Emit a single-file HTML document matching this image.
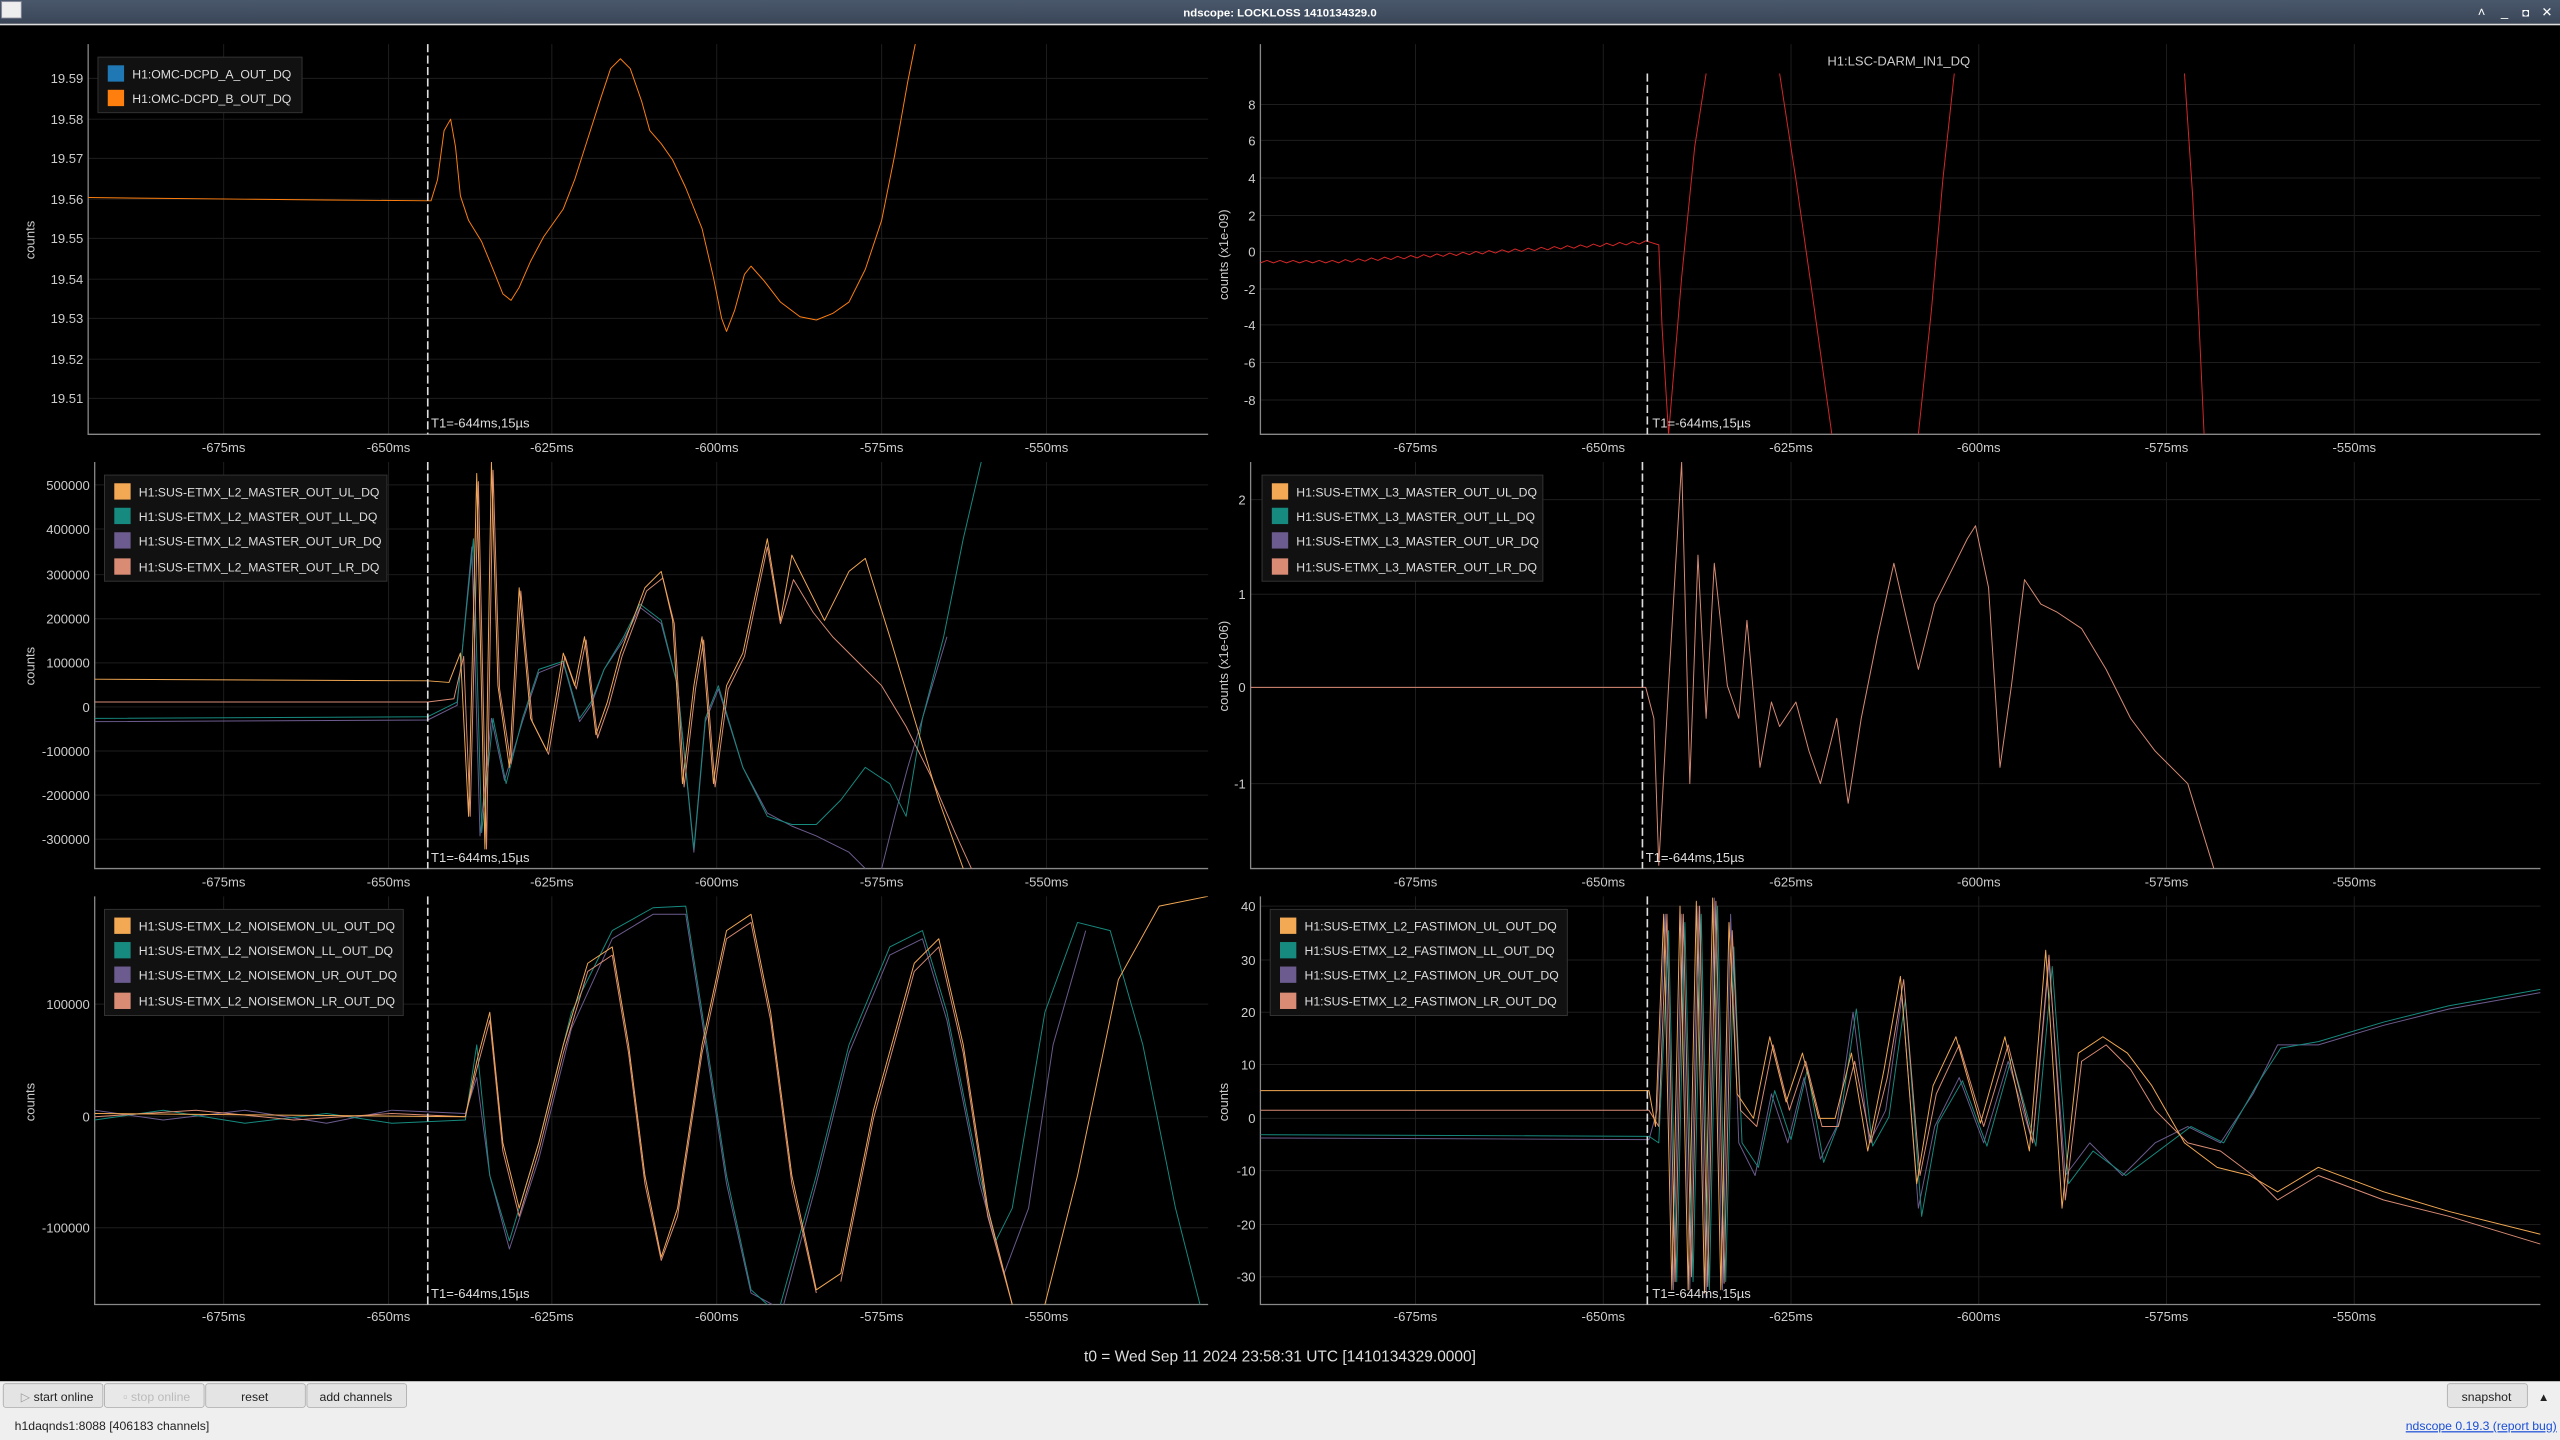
<!DOCTYPE html>
<html><head><meta charset="utf-8"><style>
html,body{margin:0;padding:0;background:#000;overflow:hidden}
svg{display:block}
text{font-family:"Liberation Sans",sans-serif}
</style></head><body>
<svg width="2560" height="1440" viewBox="0 0 1568 882" xmlns="http://www.w3.org/2000/svg">
<defs>
<linearGradient id="tb" x1="0" y1="0" x2="0" y2="1"><stop offset="0" stop-color="#4a586c"/><stop offset="1" stop-color="#3a4658"/></linearGradient>
<clipPath id="c1"><rect x="54" y="27" width="686" height="239"/></clipPath>
<clipPath id="c2"><rect x="772" y="45" width="784" height="221"/></clipPath>
<clipPath id="c3"><rect x="58" y="283" width="682" height="249"/></clipPath>
<clipPath id="c4"><rect x="766" y="283" width="790" height="249"/></clipPath>
<clipPath id="c5"><rect x="58" y="549" width="682" height="250"/></clipPath>
<clipPath id="c6"><rect x="772" y="549" width="784" height="250"/></clipPath>
</defs>
<rect width="1568" height="882" fill="#000"/>
<rect width="1568" height="14.5" fill="url(#tb)"/>
<rect x="1" y="1" width="12" height="10" fill="#eee" stroke="#99a" stroke-width="0.5"/>
<text x="784" y="10" fill="#fff" font-size="7" text-anchor="middle" font-weight="bold">ndscope: LOCKLOSS 1410134329.0</text>
<text x="1520" y="10" fill="#fff" font-size="8" text-anchor="middle">˄</text>
<text x="1534" y="10" fill="#fff" font-size="8" text-anchor="middle">_</text>
<text x="1547" y="10" fill="#fff" font-size="7" text-anchor="middle">◘</text>
<text x="1560" y="10" fill="#fff" font-size="8" text-anchor="middle">✕</text>
<rect x="0" y="14.5" width="1568" height="1" fill="#ddd"/>

<g stroke="#1e1e1e" stroke-width="0.6" fill="none">
<path d="M137,27V266M238,27V266M338,27V266M439,27V266M540,27V266M641,27V266M54,48H740M54,73H740M54,97H740M54,122H740M54,146H740M54,171H740M54,195H740M54,220H740M54,244H740"/>
<path d="M867,27V266M982,27V266M1097,27V266M1212,27V266M1327,27V266M1442,27V266M772,64H1556M772,86H1556M772,109H1556M772,132H1556M772,154H1556M772,177H1556M772,199H1556M772,222H1556M772,245H1556"/>
<path d="M137,283V532M238,283V532M338,283V532M439,283V532M540,283V532M641,283V532M58,297H740M58,324H740M58,352H740M58,379H740M58,406H740M58,433H740M58,460H740M58,487H740M58,514H740"/>
<path d="M867,283V532M982,283V532M1097,283V532M1212,283V532M1327,283V532M1442,283V532M766,306H1556M766,364H1556M766,421H1556M766,480H1556"/>
<path d="M137,549V799M238,549V799M338,549V799M439,549V799M540,549V799M641,549V799M58,615H740M58,684H740M58,752H740"/>
<path d="M867,549V799M982,549V799M1097,549V799M1212,549V799M1327,549V799M1442,549V799M772,555H1556M772,588H1556M772,620H1556M772,652H1556M772,685H1556M772,717H1556M772,750H1556M772,782H1556"/>
</g>
<g stroke="#888" stroke-width="0.8" fill="none">
<path d="M54,27V266H740"/><path d="M772,27V266H1556"/>
<path d="M58,283V532H740"/><path d="M766,283V532H1556"/>
<path d="M58,549V799H740"/><path d="M772,549V799H1556"/>
</g>
<g fill="#ccc" font-size="8">
<g text-anchor="end">
<text x="51" y="51">19.59</text><text x="51" y="76">19.58</text><text x="51" y="100">19.57</text><text x="51" y="125">19.56</text><text x="51" y="149">19.55</text><text x="51" y="174">19.54</text><text x="51" y="198">19.53</text><text x="51" y="223">19.52</text><text x="51" y="247">19.51</text>
<text x="769" y="67">8</text><text x="769" y="89">6</text><text x="769" y="112">4</text><text x="769" y="135">2</text><text x="769" y="157">0</text><text x="769" y="180">-2</text><text x="769" y="202">-4</text><text x="769" y="225">-6</text><text x="769" y="248">-8</text>
<text x="55" y="300">500000</text><text x="55" y="327">400000</text><text x="55" y="355">300000</text><text x="55" y="382">200000</text><text x="55" y="409">100000</text><text x="55" y="436">0</text><text x="55" y="463">-100000</text><text x="55" y="490">-200000</text><text x="55" y="517">-300000</text>
<text x="763" y="309">2</text><text x="763" y="367">1</text><text x="763" y="424">0</text><text x="763" y="483">-1</text>
<text x="55" y="618">100000</text><text x="55" y="687">0</text><text x="55" y="755">-100000</text>
<text x="769" y="558">40</text><text x="769" y="591">30</text><text x="769" y="623">20</text><text x="769" y="655">10</text><text x="769" y="688">0</text><text x="769" y="720">-10</text><text x="769" y="753">-20</text><text x="769" y="785">-30</text>
</g>
<g text-anchor="middle">
<text x="137" y="277">-675ms</text><text x="238" y="277">-650ms</text><text x="338" y="277">-625ms</text><text x="439" y="277">-600ms</text><text x="540" y="277">-575ms</text><text x="641" y="277">-550ms</text>
<text x="867" y="277">-675ms</text><text x="982" y="277">-650ms</text><text x="1097" y="277">-625ms</text><text x="1212" y="277">-600ms</text><text x="1327" y="277">-575ms</text><text x="1442" y="277">-550ms</text>
<text x="137" y="543">-675ms</text><text x="238" y="543">-650ms</text><text x="338" y="543">-625ms</text><text x="439" y="543">-600ms</text><text x="540" y="543">-575ms</text><text x="641" y="543">-550ms</text>
<text x="867" y="543">-675ms</text><text x="982" y="543">-650ms</text><text x="1097" y="543">-625ms</text><text x="1212" y="543">-600ms</text><text x="1327" y="543">-575ms</text><text x="1442" y="543">-550ms</text>
<text x="137" y="809">-675ms</text><text x="238" y="809">-650ms</text><text x="338" y="809">-625ms</text><text x="439" y="809">-600ms</text><text x="540" y="809">-575ms</text><text x="641" y="809">-550ms</text>
<text x="867" y="809">-675ms</text><text x="982" y="809">-650ms</text><text x="1097" y="809">-625ms</text><text x="1212" y="809">-600ms</text><text x="1327" y="809">-575ms</text><text x="1442" y="809">-550ms</text>
<text x="1163" y="40">H1:LSC-DARM_IN1_DQ</text>
</g>
<text transform="translate(21,147) rotate(-90)" text-anchor="middle">counts</text>
<text transform="translate(752,156) rotate(-90)" text-anchor="middle">counts (x1e-09)</text>
<text transform="translate(21,408) rotate(-90)" text-anchor="middle">counts</text>
<text transform="translate(752,408) rotate(-90)" text-anchor="middle">counts (x1e-06)</text>
<text transform="translate(21,675) rotate(-90)" text-anchor="middle">counts</text>
<text transform="translate(752,675) rotate(-90)" text-anchor="middle">counts</text>
</g>

<g fill="none" stroke-width="0.6" stroke-linejoin="round">
<path clip-path="url(#c1)" stroke="#ff7f0e" d="M54,121 L100,121.5 L150,122 L200,122.5 L264,123 L268,110 L272,80 L276,73 L279,90 L282,120 L287,135 L295,148 L302,165 L308,180 L313,184 L318,176 L325,160 L333,145 L345,128 L352,110 L360,85 L368,60 L374,42 L380,36 L386,42 L393,62 L398,80 L405,88 L412,98 L420,115 L430,140 L437,170 L442,195 L445,203 L450,190 L456,168 L460,163 L468,172 L478,185 L490,194 L500,196 L510,192 L520,185 L530,165 L540,135 L548,95 L556,50 L562,20"/>
<path clip-path="url(#c2)" stroke="#d62728" d="M772,161 l4,-1.5 l4,1.5 l4,-1.5 l4,1.5 l4,-1.5 l4,1.5 l4,-1.5 l4,1.5 l4,-1.5 l4,1.5 l4,-1.5 l4,1.5 l4,-2 l4,1.5 l4,-2 l4,1.5 l4,-2 l4,1.5 l4,-2 l4,1.5 l4,-2 l4,1.5 l4,-2 l4,1.5 l4,-2 l4,1.5 l4,-2 l4,1.5 l4,-2 l4,1.5 l4,-2 l4,1.5 l4,-2 l4,1.5 l4,-2 l4,1.5 l4,-2 l4,1.5 l4,-2 l4,1.5 l4,-2 l4,1.5 l4,-2 l4,1.5 l4,-2 l4,1.5 l4,-2 l4,1.5 l4,-2 l4,1.5 l4,-2 l4,1.5 l4,-2 l4,1.5 l4,-2 l4,1.5 l4,-2 l4,1.5 l4,-2 L1016,150 L1018,200 L1022,266 M1022,266 L1030,170 L1038,90 L1045,45 M1090,45 L1100,110 L1110,180 L1122,266 M1175,266 L1183,190 L1190,110 L1197,45 M1338,45 L1343,120 L1347,200 L1350,266"/>

<g clip-path="url(#c3)">
<path stroke="#6c5b8e" d="M58,442 L262,441 L280,432 L289,335 L294,512 L301,440 L309,478 L320,442 L330,412 L345,406 L355,442 L362,432 L370,410 L382,392 L392,372 L405,382 L415,420 L425,522 L432,442 L440,422 L455,470 L470,498 L485,506 L500,512 L520,522 L530,532 M540,532 L548,500 L556,470 L568,430 L580,390"/>
<path stroke="#168a7f" d="M58,440 L262,439 L280,430 L290,330 L295,510 L302,440 L310,480 L320,440 L330,410 L345,405 L355,440 L362,430 L370,410 L382,390 L392,370 L405,380 L415,420 L425,520 L432,440 L440,420 L455,470 L470,500 L485,505 L500,505 L515,490 L530,470 L545,480 L555,500 L565,440 L578,390 L590,330 L601,283"/>
<path stroke="#d98b74" d="M58,430 L262,430 L278,428 L284,402 L288,500 L293,295 L298,520 L302,288 L306,422 L313,468 L319,362 L326,442 L336,462 L346,402 L353,422 L359,392 L366,452 L373,432 L381,402 L396,362 L406,354 L413,382 L419,482 L426,422 L431,392 L438,482 L446,422 L456,402 L470,335 L478,382 L486,355 L498,375 L510,390 L525,405 L540,420 L555,445 L570,475 L585,510 L595,532"/>
<path stroke="#f3a953" d="M58,416 L262,417 L275,418 L282,400 L287,500 L292,290 L297,520 L301,283 L305,420 L312,470 L318,360 L325,440 L335,460 L345,400 L352,420 L358,390 L365,450 L372,430 L380,400 L395,360 L405,350 L412,380 L418,480 L425,420 L430,390 L437,480 L445,420 L455,400 L470,330 L478,380 L485,340 L495,360 L505,380 L520,350 L530,342 L545,390 L560,440 L575,490 L590,532"/>
</g>

<path clip-path="url(#c4)" stroke="#d98b74" d="M766,421 L1008,421 L1013,440 L1016,530 L1022,420 L1030,283 L1035,480 L1040,340 L1045,440 L1050,345 L1058,420 L1065,440 L1070,380 L1078,470 L1085,430 L1090,445 L1100,430 L1108,460 L1115,480 L1125,440 L1132,492 L1140,440 L1150,390 L1160,345 L1168,380 L1175,410 L1185,370 L1195,350 L1205,330 L1210,322 L1218,360 L1225,470 L1232,420 L1240,355 L1250,370 L1260,375 L1275,385 L1290,410 L1305,440 L1320,460 L1340,480 L1356,532"/>

<g clip-path="url(#c5)">
<path stroke="#6c5b8e" d="M58,680 L100,686 L150,680 L200,688 L240,680 L285,682 L292,660 L300,720 L312,765 L330,710 L350,630 L375,575 L400,560 L420,560 L430,625 L445,725 L460,792 L475,800 M480,799 L500,725 L520,645 L545,585 L565,575 L580,625 L600,725 L615,780 L630,740 L645,640 L665,570"/>
<path stroke="#168a7f" d="M58,686 L100,680 L150,688 L200,682 L240,688 L285,686 L292,640 L300,720 L312,760 L330,700 L350,620 L375,570 L400,556 L420,555 L430,620 L445,720 L460,790 L470,799 M478,799 L500,720 L520,640 L545,580 L565,570 L580,620 L600,720 L610,760 L620,740 L640,620 L660,565 L680,570 L700,640 L720,740 L735,799"/>
<path stroke="#d98b74" d="M58,684 L120,680 L180,686 L240,682 L285,684 L292,655 L300,625 L308,705 L318,745 L330,705 L345,645 L360,595 L375,585 L385,645 L395,725 L405,772 L415,745 L430,645 L445,575 L460,565 L472,625 L485,725 L500,792 M515,785 L535,685 L560,595 L575,580 L590,645 L605,745 L620,799"/>
<path stroke="#f3a953" d="M58,682 L285,684 L292,650 L300,620 L308,700 L318,740 L330,700 L345,640 L360,590 L375,580 L385,640 L395,720 L405,770 L415,740 L430,640 L445,570 L460,560 L472,620 L485,720 L500,790 L515,780 L535,680 L560,590 L575,575 L590,640 L605,740 L620,799 M640,799 L660,720 L685,600 L710,555 L740,549"/>
</g>

<g clip-path="url(#c6)">
<path stroke="#6c5b8e" d="M772,697 L1010,698 L1015,680 L1020,560 L1025,790 L1030,560 L1035,790 L1040,555 L1045,795 L1050,550 L1055,790 L1060,560 L1065,700 L1075,720 L1085,670 L1095,700 L1105,660 L1115,710 L1125,690 L1135,620 L1145,700 L1155,680 L1165,610 L1175,740 L1185,690 L1200,660 L1215,700 L1230,650 L1245,700 L1255,590 L1265,720 L1280,700 L1300,720 L1320,700 L1340,690 L1360,700 L1380,670 L1395,640 L1420,640 L1460,628 L1500,618 L1556,608"/>
<path stroke="#168a7f" d="M772,695 L1010,696 L1016,700 L1022,570 L1027,785 L1032,565 L1037,785 L1042,560 L1047,790 L1052,555 L1057,785 L1062,580 L1067,700 L1077,715 L1087,668 L1097,698 L1107,655 L1117,712 L1127,686 L1137,618 L1147,702 L1157,684 L1167,612 L1177,745 L1187,688 L1202,662 L1217,702 L1232,648 L1247,702 L1257,592 L1267,725 L1282,705 L1302,720 L1322,705 L1342,690 L1362,700 L1382,665 L1397,642 L1420,638 L1460,626 L1500,616 L1556,606"/>
<path stroke="#d98b74" d="M772,680 L1010,680 L1016,690 L1021,560 L1026,785 L1031,560 L1036,782 L1041,555 L1046,788 L1051,552 L1056,786 L1061,570 L1066,680 L1076,690 L1086,640 L1096,680 L1106,650 L1116,690 L1126,690 L1136,650 L1146,700 L1156,660 L1166,600 L1176,720 L1186,670 L1200,640 L1215,690 L1230,640 L1245,700 L1255,585 L1265,735 L1275,650 L1290,640 L1305,655 L1320,680 L1340,700 L1360,705 L1380,720 L1395,735 L1420,720 L1460,735 L1500,745 L1556,762"/>
<path stroke="#f3a953" d="M772,668 L1010,668 L1014,690 L1019,560 L1024,790 L1029,555 L1034,790 L1039,552 L1044,792 L1049,550 L1054,790 L1059,565 L1064,670 L1074,685 L1084,635 L1094,675 L1104,645 L1114,685 L1124,685 L1134,645 L1144,705 L1154,655 L1164,598 L1174,725 L1184,665 L1198,635 L1213,688 L1228,635 L1243,705 L1253,582 L1263,740 L1273,645 L1288,635 L1303,645 L1318,665 L1338,700 L1358,715 L1378,720 L1395,730 L1420,715 L1460,730 L1500,742 L1556,756"/>
</g>
</g>

<g stroke="#ddd" stroke-width="1" stroke-dasharray="5,2">
<path d="M262,27V266M1009,45V266M262,283V532M1006,283V532M262,549V799M1009,549V799"/>
</g>
<g fill="#ddd" font-size="8">
<text x="264" y="262">T1=-644ms,15µs</text><text x="1012" y="262">T1=-644ms,15µs</text>
<text x="264" y="528">T1=-644ms,15µs</text><text x="1008" y="528">T1=-644ms,15µs</text>
<text x="264" y="795">T1=-644ms,15µs</text><text x="1012" y="795">T1=-644ms,15µs</text>
</g>

<g font-size="7.5" fill="#ddd">
<rect x="60" y="35" width="125" height="34" fill="#111" stroke="#333" stroke-width="0.6"/>
<rect x="66" y="40" width="10" height="10" fill="#1f77b4"/><text x="81" y="48">H1:OMC-DCPD_A_OUT_DQ</text>
<rect x="66" y="55" width="10" height="10" fill="#ff7f0e"/><text x="81" y="63">H1:OMC-DCPD_B_OUT_DQ</text>

<rect x="64" y="291" width="173" height="65" fill="#111" stroke="#333" stroke-width="0.6"/>
<rect x="70" y="296" width="10" height="10" fill="#f3a953"/><text x="85" y="304">H1:SUS-ETMX_L2_MASTER_OUT_UL_DQ</text>
<rect x="70" y="311" width="10" height="10" fill="#168a7f"/><text x="85" y="319">H1:SUS-ETMX_L2_MASTER_OUT_LL_DQ</text>
<rect x="70" y="326" width="10" height="10" fill="#6c5b8e"/><text x="85" y="334">H1:SUS-ETMX_L2_MASTER_OUT_UR_DQ</text>
<rect x="70" y="342" width="10" height="10" fill="#d98b74"/><text x="85" y="350">H1:SUS-ETMX_L2_MASTER_OUT_LR_DQ</text>

<rect x="773" y="291" width="172" height="65" fill="#111" stroke="#333" stroke-width="0.6"/>
<rect x="779" y="296" width="10" height="10" fill="#f3a953"/><text x="794" y="304">H1:SUS-ETMX_L3_MASTER_OUT_UL_DQ</text>
<rect x="779" y="311" width="10" height="10" fill="#168a7f"/><text x="794" y="319">H1:SUS-ETMX_L3_MASTER_OUT_LL_DQ</text>
<rect x="779" y="326" width="10" height="10" fill="#6c5b8e"/><text x="794" y="334">H1:SUS-ETMX_L3_MASTER_OUT_UR_DQ</text>
<rect x="779" y="342" width="10" height="10" fill="#d98b74"/><text x="794" y="350">H1:SUS-ETMX_L3_MASTER_OUT_LR_DQ</text>

<rect x="64" y="557" width="183" height="65" fill="#111" stroke="#333" stroke-width="0.6"/>
<rect x="70" y="562" width="10" height="10" fill="#f3a953"/><text x="85" y="570">H1:SUS-ETMX_L2_NOISEMON_UL_OUT_DQ</text>
<rect x="70" y="577" width="10" height="10" fill="#168a7f"/><text x="85" y="585">H1:SUS-ETMX_L2_NOISEMON_LL_OUT_DQ</text>
<rect x="70" y="592" width="10" height="10" fill="#6c5b8e"/><text x="85" y="600">H1:SUS-ETMX_L2_NOISEMON_UR_OUT_DQ</text>
<rect x="70" y="608" width="10" height="10" fill="#d98b74"/><text x="85" y="616">H1:SUS-ETMX_L2_NOISEMON_LR_OUT_DQ</text>

<rect x="778" y="557" width="182" height="65" fill="#111" stroke="#333" stroke-width="0.6"/>
<rect x="784" y="562" width="10" height="10" fill="#f3a953"/><text x="799" y="570">H1:SUS-ETMX_L2_FASTIMON_UL_OUT_DQ</text>
<rect x="784" y="577" width="10" height="10" fill="#168a7f"/><text x="799" y="585">H1:SUS-ETMX_L2_FASTIMON_LL_OUT_DQ</text>
<rect x="784" y="592" width="10" height="10" fill="#6c5b8e"/><text x="799" y="600">H1:SUS-ETMX_L2_FASTIMON_UR_OUT_DQ</text>
<rect x="784" y="608" width="10" height="10" fill="#d98b74"/><text x="799" y="616">H1:SUS-ETMX_L2_FASTIMON_LR_OUT_DQ</text>
</g>

<text x="784" y="834" fill="#ddd" font-size="9.5" text-anchor="middle">t0 = Wed Sep 11 2024 23:58:31 UTC [1410134329.0000]</text>

<rect x="0" y="846" width="1568" height="36" fill="#efefef"/>
<g font-size="7.5" text-anchor="middle" stroke="#aaa" stroke-width="0.5">
<rect x="2" y="847.5" width="61" height="14.5" rx="1.5" fill="#e4e4e4"/>
<rect x="64" y="847.5" width="61" height="14.5" rx="1.5" fill="#e8e8e8"/>
<rect x="126" y="847.5" width="61" height="14.5" rx="1.5" fill="#e4e4e4"/>
<rect x="188" y="847.5" width="61" height="14.5" rx="1.5" fill="#e4e4e4"/>
<rect x="1499" y="847.5" width="49" height="14.5" rx="1.5" fill="#e4e4e4"/>
</g>
<g font-size="7.5" text-anchor="middle" fill="#222">
<text x="35" y="858"><tspan fill="#999">▷ </tspan>start online</text>
<text x="96" y="858" fill="#bbb">▫ stop online</text>
<text x="156" y="858">reset</text>
<text x="218" y="858">add channels</text>
<text x="1523" y="858">snapshot</text>
<text x="1558" y="858" font-size="7">▲</text>
</g>
<text x="9" y="876" font-size="7.5" fill="#222">h1daqnds1:8088  [406183 channels]</text>
<text x="1566" y="876" font-size="7.5" fill="#1a4fd6" text-anchor="end" text-decoration="underline">ndscope 0.19.3 (report bug)</text>
</svg>
</body></html>
